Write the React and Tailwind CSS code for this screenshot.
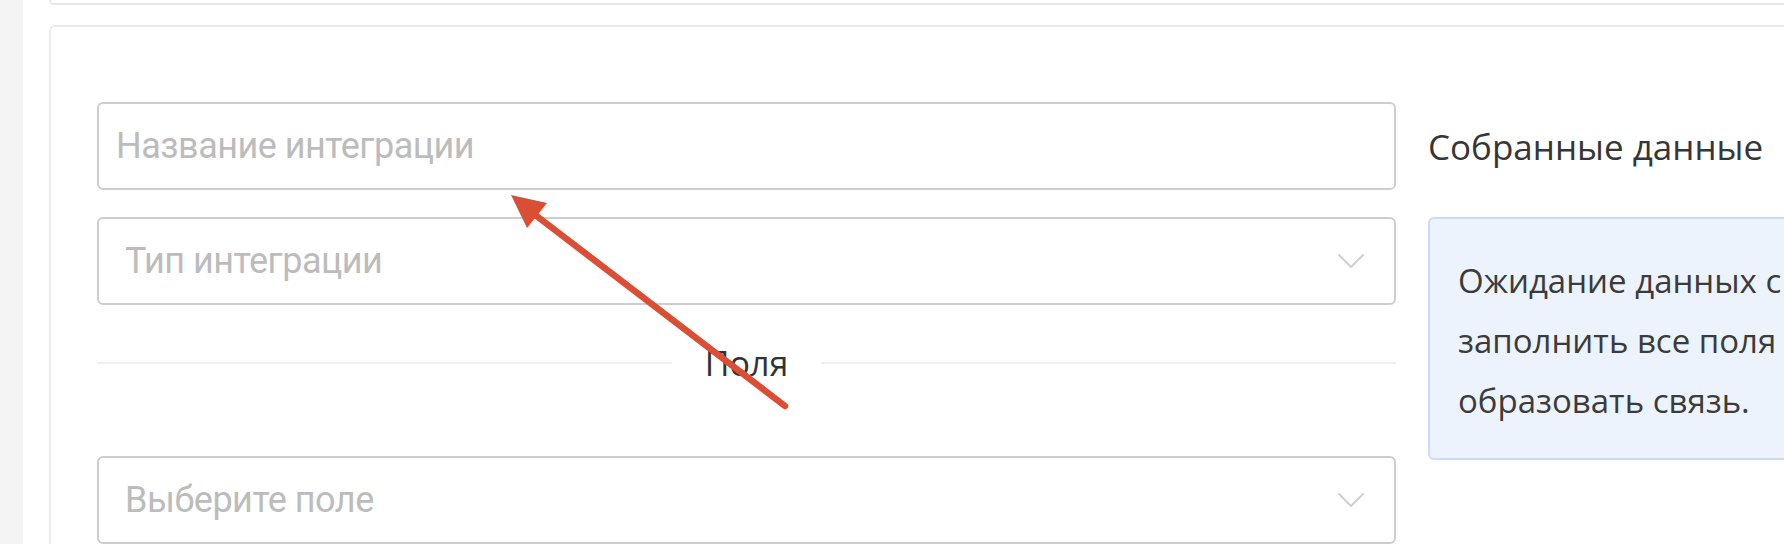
import React from "react";

const Chevron = () => (
  <svg width="28" height="16" viewBox="0 0 28 16" fill="none" className="shrink-0">
    <path d="M2 2 L14 14 L26 2" stroke="#cfcfcf" strokeWidth="2" strokeLinecap="round" strokeLinejoin="round" />
  </svg>
);

const SelectBox = ({ placeholder, className = "" }) => (
  <div
    className={`h-[88px] shrink-0 border-2 border-[#cdcdcd] rounded-[6px] bg-white flex items-center justify-between pl-[26px] pr-[29px] ${className}`}
  >
    <span className="text-[36px] tracking-[-0.5px] text-[#bcbcbc] font-['Roboto',sans-serif] leading-none">{placeholder}</span>
    <Chevron />
  </div>
);

export default function App() {
  return (
    <div className="relative w-[1784px] h-[544px] overflow-hidden bg-[#f4f4f4] flex font-['Open_Sans',sans-serif]">
      <div className="w-[23px] shrink-0" />
      <div className="w-[2000px] shrink-0 bg-white pl-[26px] flex flex-col">
        <div className="h-[5px] shrink-0 border-2 border-t-0 border-[#e8e8e8] rounded-b-[6px]" />
        <div className="mt-[20px] border-2 border-[#ebebeb] rounded-[6px] pt-[75px] pb-[120px] pl-[46px] flex gap-[32px]">
          <div className="w-[1299px] shrink-0 flex flex-col">
            <div className="h-[88px] border-2 border-[#cdcdcd] rounded-[6px] flex items-center pl-[17px]">
              <input
                placeholder="Название интеграции"
                className="w-full bg-transparent outline-none text-[36px] tracking-[-0.5px] font-['Roboto',sans-serif] placeholder:text-[#bcbcbc]"
              />
            </div>
            <SelectBox placeholder="Тип интеграции" className="mt-[27px]" />
            <div className="mt-[32px] h-[52px] flex items-center">
              <div className="flex-1 h-[2px] bg-[#eef0f3]" />
              <span className="px-[33px] text-[34px] leading-[52px] text-[#2f3336]">Поля</span>
              <div className="flex-1 h-[2px] bg-[#eef0f3]" />
            </div>
            <SelectBox placeholder="Выберите поле" className="mt-[67px]" />
          </div>
          <div className="w-[640px] shrink-0 flex flex-col">
            <div className="h-[88px] pt-[3px] flex items-center text-[35px] text-[#363636]">Собранные данные</div>
            <div className="mt-[27px] h-[243px] bg-[#ecf3fd] border-2 border-[#cadcf5] rounded-[6px] pl-[28px] pt-[32px] text-[33px] leading-[60px] text-[#3b3b3b] whitespace-nowrap">
              <div>Ожидание данных с сервера. Необходимо</div>
              <div>заполнить все поля</div>
              <div>образовать связь.</div>
            </div>
          </div>
        </div>
      </div>
      <svg className="absolute inset-0 pointer-events-none" width="1784" height="544" viewBox="0 0 1784 544">
        <line x1="534" y1="214" x2="785" y2="406" stroke="#da4e35" strokeWidth="6.5" strokeLinecap="round" />
        <polygon points="511,195 547,203 527,228" fill="#da4e35" />
      </svg>
    </div>
  );
}
